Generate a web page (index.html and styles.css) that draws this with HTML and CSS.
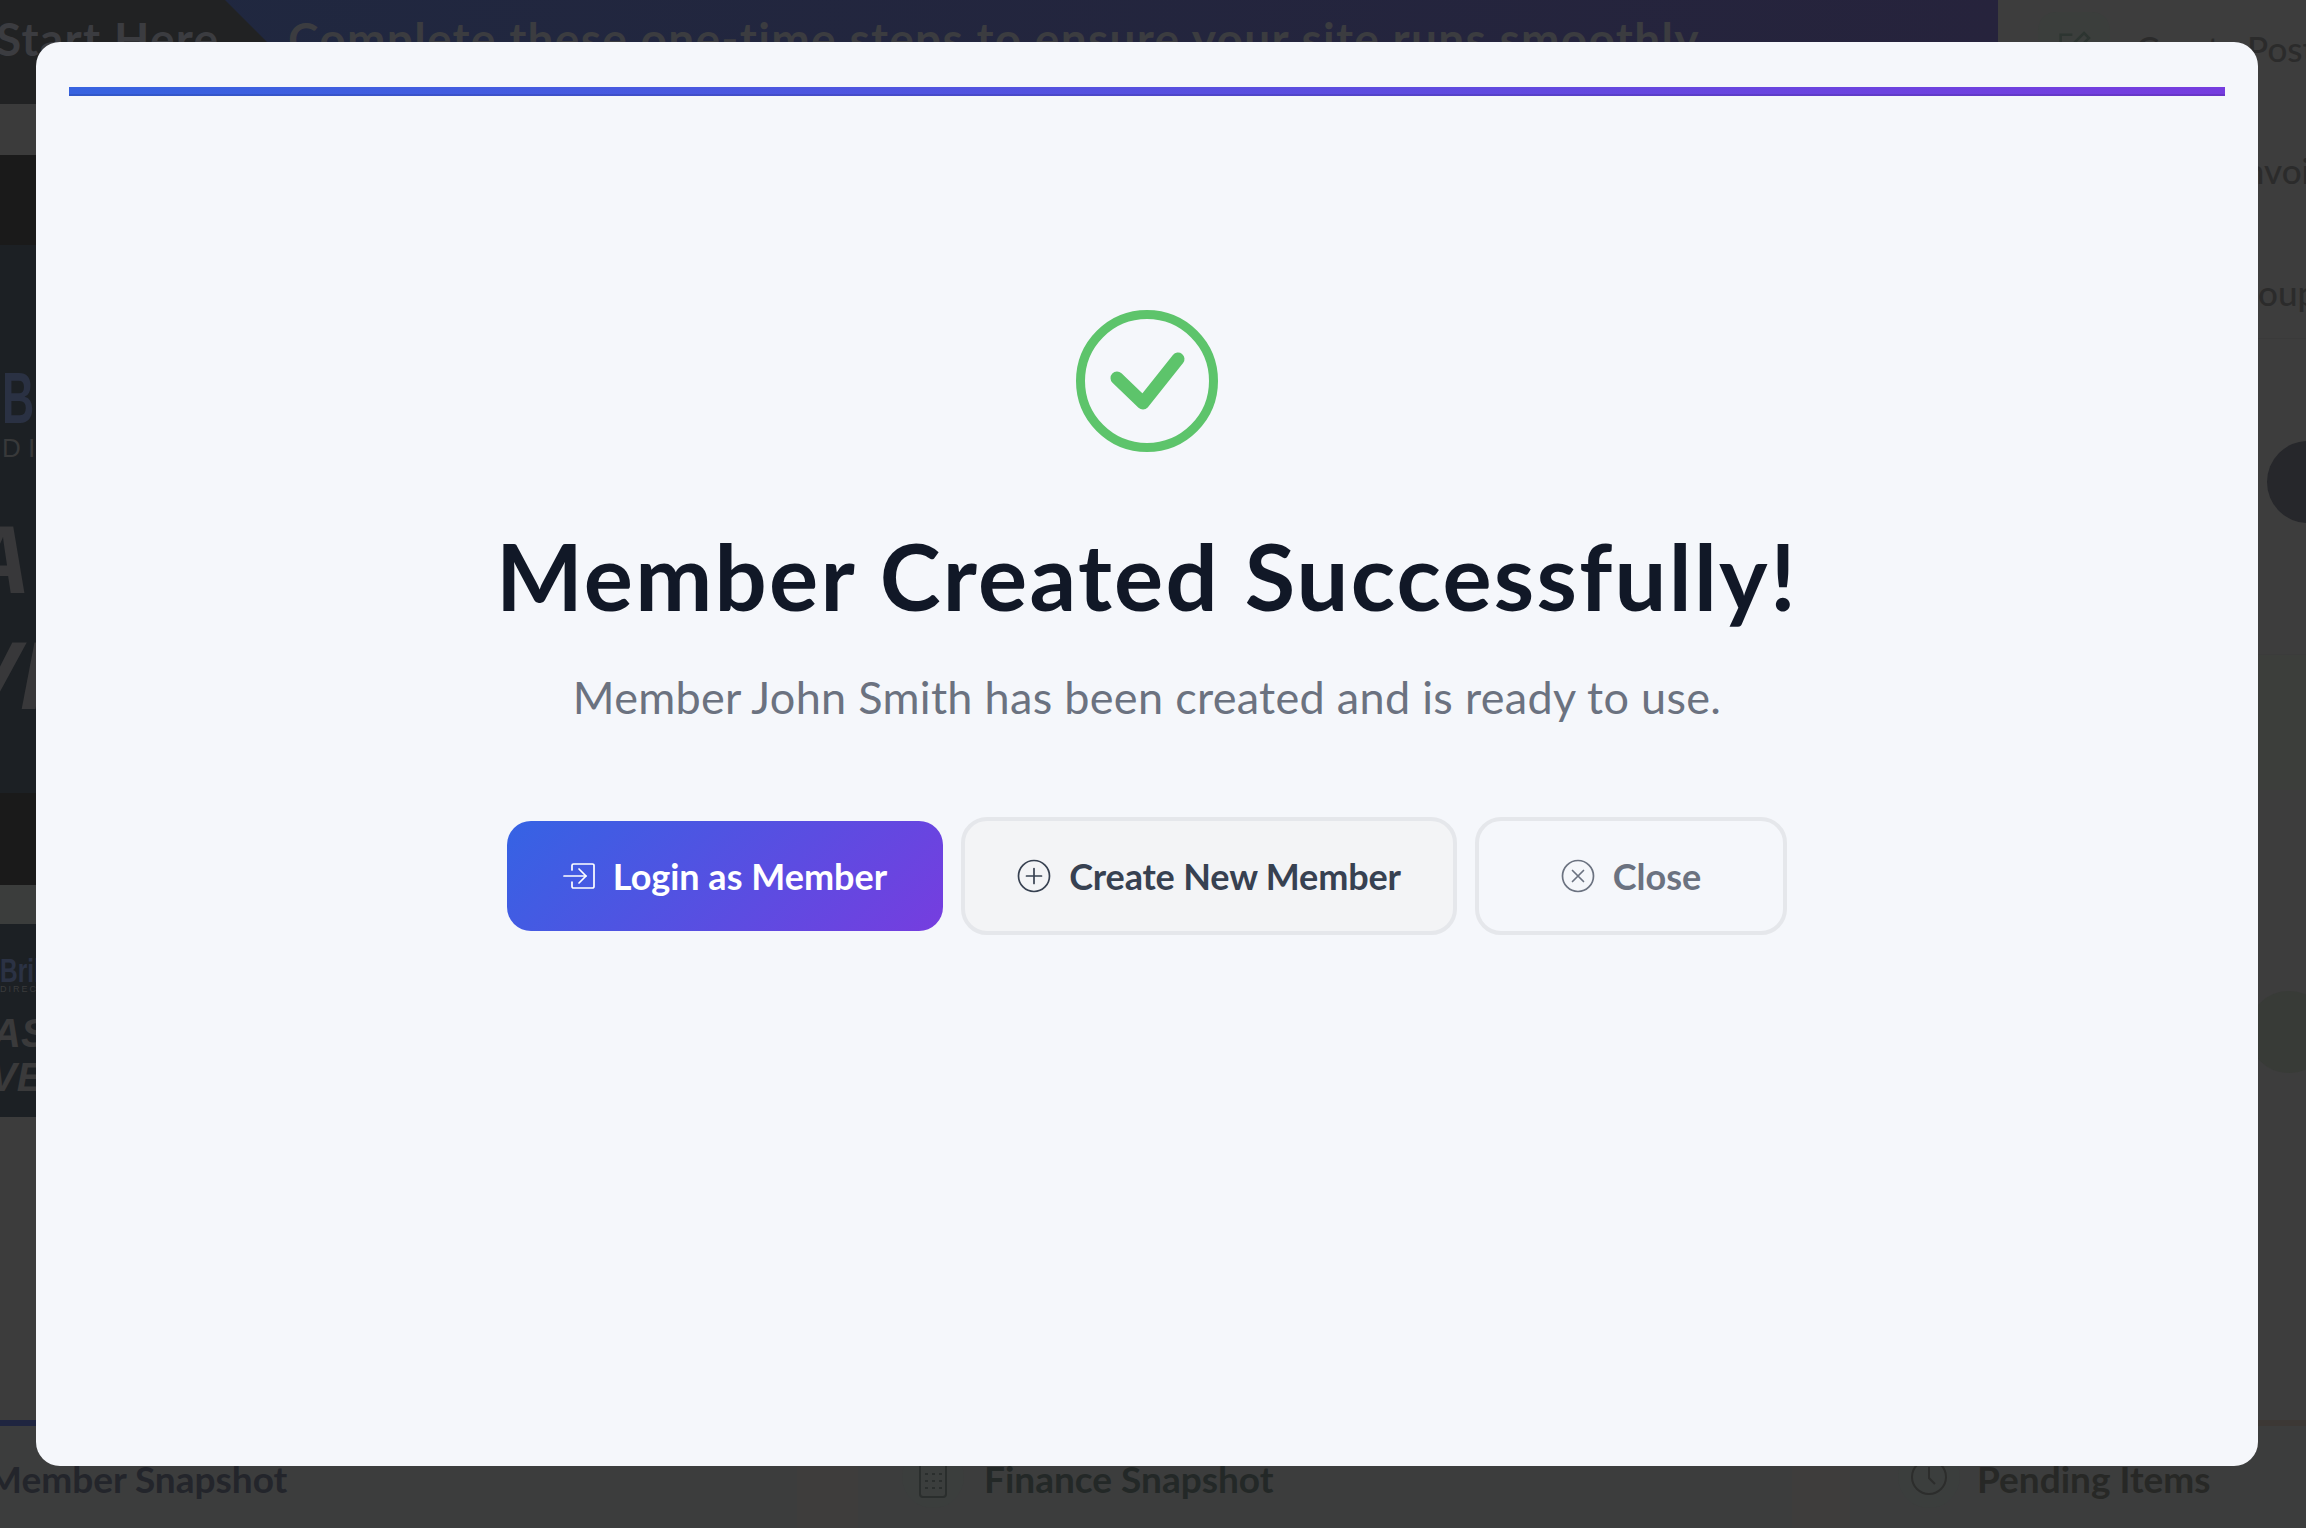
FILE: index.html
```html
<!DOCTYPE html>
<html lang="en">
<head>
    <meta charset="UTF-8">
    <meta name="viewport" content="width=device-width, initial-scale=1.0">
    <title>Member Created</title>
    <link rel="stylesheet" href="styles.css">
</head>
<body>

<div class="page">
    <div class="main">
        <div class="banner">
            <div class="banner-start"><span>Start Here</span></div>
            <div class="banner-text">Complete these one-time steps to ensure your site runs smoothly</div>
        </div>
        <div class="side-tiles">
            <div class="tile-bar"></div>
            <div class="tile-dark"></div>
            <div class="tile-photo tile-large">
                <div class="logo-b">B</div>
                <div class="logo-sub">D I</div>
                <div class="promo promo-a">A</div>
                <div class="promo promo-v">VI</div>
            </div>
            <div class="tile-dark tile-short"></div>
            <div class="tile-bar tile-bar-thin"></div>
            <div class="tile-photo tile-small">
                <div class="logo-small">Bril</div>
                <div class="logo-small-sub">DIREC</div>
                <div class="promo-small">AS</div>
                <div class="promo-small promo-small-b">VEE</div>
            </div>
        </div>
    </div>

    <div class="quick-panel">
        <div class="quick-list">
            <div class="quick-item">
                <div class="quick-icon">
                    <svg width="40" height="40" viewBox="0 0 24 24" fill="none" stroke="#2d3531" stroke-width="1.5"><path d="M11 4H4v16h16v-7"/><path d="M18 3l3 3-9 9H9v-3z"/></svg>
                </div>
                <span>Create Post</span>
            </div>
            <div class="quick-item quick-plain"><span>Create Invoice</span></div>
            <div class="quick-item quick-plain"><span>Create Coupon</span></div>
        </div>
        <div class="panel-row">
            <div class="panel-dot"></div>
        </div>
        <div class="panel-row panel-tint"></div>
        <div class="panel-row panel-lower">
            <div class="panel-dot panel-dot-green"></div>
        </div>
    </div>

    <div class="snapshots">
        <div class="snapshot snapshot-member"><h3>Member Snapshot</h3></div>
        <div class="snapshot-gap"></div>
        <div class="snapshot snapshot-finance">
            <div class="snap-icon">
                <svg width="30" height="44" viewBox="0 0 30 44" fill="none" stroke="#2a2e2d" stroke-width="2"><rect x="2" y="2" width="26" height="40" rx="3"/><path d="M7 19h3M14 19h3M21 19h3M7 26h3M14 26h3M21 26h3M7 33h3M14 33h3M21 33h3"/></svg>
            </div>
            <h3>Finance Snapshot</h3>
        </div>
        <div class="snapshot-gap"></div>
        <div class="snapshot snapshot-pending">
            <div class="snap-icon">
                <svg width="38" height="38" viewBox="0 0 38 38" fill="none" stroke="#2c2d2c" stroke-width="2"><circle cx="19" cy="19" r="17"/><path d="M19 9v11l6 6"/></svg>
            </div>
            <h3>Pending Items</h3>
        </div>
    </div>
</div>

<div class="modal">
    <div class="modal-bar"></div>
    <div class="modal-body">
        <svg class="success-icon" width="142" height="142" viewBox="0 0 142 142" fill="none" stroke="#5dc46b" stroke-linecap="round" stroke-linejoin="round">
            <circle cx="71" cy="71" r="66.5" stroke-width="9"/>
            <path d="M41 68l26 25 35-44" stroke-width="13"/>
        </svg>
        <h1 class="modal-title">Member Created Successfully!</h1>
        <p class="modal-text">Member John Smith has been created and is ready to use.</p>
        <div class="modal-actions">
            <button class="btn btn-primary">
                <svg width="32" height="26" viewBox="0 0 32 26" fill="none" stroke="#fff" stroke-width="1.7" stroke-linecap="round" stroke-linejoin="round"><path d="M9 7V2.5A1.5 1.5 0 0 1 10.500 1h19A1.500 1.500 0 0 1 31 2.500v21a1.500 1.500 0 0 1-1.500 1.500h-19A1.500 1.500 0 0 1 9 23.500V19"/><path d="M1 13h22"/><path d="M16 6l7 7-7 7"/></svg>
                Login as Member
            </button>
            <button class="btn btn-light">
                <svg width="34" height="34" viewBox="0 0 34 34" fill="none" stroke="#374151" stroke-width="1.700" stroke-linecap="round"><circle cx="17" cy="17" r="15.500"/><path d="M17 9.500v15M9.500 17h15"/></svg>
                Create New Member
            </button>
            <button class="btn btn-ghost">
                <svg width="34" height="34" viewBox="0 0 34 34" fill="none" stroke="#6b7280" stroke-width="1.700" stroke-linecap="round"><circle cx="17" cy="17" r="15.500"/><path d="M11.500 11.500l11 11M22.500 11.500l-11 11"/></svg>
                Close
            </button>
        </div>
    </div>
</div>

</body>
</html>
```

FILE: styles.css
```css
* {
    box-sizing: border-box;
}
body {
    margin: 0;
    width: 2306px;
    height: 1528px;
    overflow: hidden;
    font-family: Lato, "Noto Sans", sans-serif;
    background-color: #3c3c3c;
}

/* dimmed page behind the modal */
.page {
    display: grid;
    grid-template-columns: 1998px 308px;
    grid-template-rows: 1420px 108px;
    width: 2306px;
    height: 1528px;
    overflow: hidden;
}
.main {
    overflow: hidden;
}
.banner {
    display: flex;
    height: 104px;
    background: linear-gradient(90deg, #1f2840, #26233c);
    font-size: 46px;
    letter-spacing: 1.3px;
    font-weight: 700;
    color: #3b3c40;
    line-height: 78px;
    white-space: nowrap;
}
.banner-start {
    width: 290px;
    flex-shrink: 0;
    margin-right: -2px;
    background-color: #212223;
    clip-path: polygon(0 0, 225px 0, 290px 65px, 290px 104px, 0 104px);
    overflow: hidden;
}
.banner-start span {
    display: block;
    margin-left: -4px;
}
.banner-text {
    overflow: hidden;
}
.side-tiles {
    width: 400px;
}
.tile-bar {
    height: 51px;
    background-color: #3b3b3b;
}
.tile-bar-thin {
    height: 39px;
    background-color: #3b3d3c;
}
.tile-dark {
    height: 90px;
    background-color: #1a1a1a;
}
.tile-short {
    height: 92px;
}
.tile-photo {
    background-color: #1c2024;
    overflow: hidden;
    font-family: "Liberation Sans", sans-serif;
    font-weight: 700;
    white-space: nowrap;
}
.tile-large {
    height: 548px;
    padding-top: 118px;
}
.tile-small {
    height: 193px;
    padding-top: 32px;
}
.logo-b {
    font-size: 72px;
    line-height: 70px;
    color: #2a3143;
    margin-left: 2px;
    transform: scaleX(0.62);
    transform-origin: left;
}
.logo-sub {
    font-size: 26px;
    line-height: 30px;
    color: #38393a;
    margin-left: 2px;
    font-weight: 400;
}
.promo {
    font-size: 96px;
    line-height: 70px;
    color: #38383a;
    font-style: italic;
}
.promo-a {
    margin: 62px 0 0 -38px;
}
.promo-v {
    margin: 46px 0 0 -44px;
}
.logo-small {
    font-size: 34px;
    line-height: 28px;
    color: #2b3244;
    transform: scaleX(0.72);
    transform-origin: left;
}
.logo-small-sub {
    font-size: 9px;
    line-height: 10px;
    letter-spacing: 2px;
    color: #3a3b3c;
    font-weight: 400;
}
.promo-small {
    font-size: 40px;
    line-height: 34px;
    color: #3a3a3b;
    font-style: italic;
    margin: 22px 0 0 -8px;
}
.promo-small-b {
    margin: 10px 0 0 -10px;
}

.quick-panel {
    background-color: #3d3d3d;
    overflow: hidden;
}
.quick-list {
    height: 339px;
    padding: 12px 0 0 40px;
    border-bottom: 1px solid #3a3a3a;
    margin-bottom: 46px;
}
.quick-item {
    display: flex;
    align-items: center;
    gap: 26px;
    height: 72px;
    font-size: 35px;
    font-weight: 500;
    color: #2b2b2b;
    white-space: nowrap;
}
.quick-plain {
    margin: 50px 0 0 86px;
}
.quick-icon {
    display: flex;
    align-items: center;
    justify-content: center;
    flex-shrink: 0;
    width: 72px;
    height: 72px;
    border-radius: 18px;
    background-color: #3b3e3c;
}
.panel-row {
    height: 270px;
    padding: 56px 0 0 269px;
    border-bottom: 1px solid #3b3b3b;
}
.panel-tint {
    height: 135px;
    padding: 0;
    border: none;
    background-color: #3c3e3b;
}
.panel-lower {
    height: 500px;
    padding: 201px 0 0 250px;
    border-bottom: none;
}
.panel-dot {
    width: 82px;
    height: 82px;
    border-radius: 50%;
    background-color: #26272b;
}
.panel-dot-green {
    background-color: #383b37;
}

.snapshots {
    grid-column: 1 / 3;
    display: grid;
    grid-template-columns: 797px 61px 934px 58px 1fr;
    border-top: 6px solid #3c3835;
    background-color: #3c3d3d;
}
.snapshot {
    display: flex;
    align-items: flex-start;
    height: 102px;
    white-space: nowrap;
}
.snapshot h3 {
    margin: 31px 0 0;
    font-size: 37px;
    line-height: 44px;
    font-weight: 700;
    color: #23252b;
}
.snapshot-gap {
    background-color: #3e3d3c;
}
.snapshot-member {
    border-top: 6px solid #1f2540;
    margin-top: -6px;
}
.snapshot-member h3 {
    margin: 31px 0 0 -13px;
}
.snapshot-finance {
    padding-left: 44px;
    gap: 20px;
}
.snapshot-pending {
    padding-left: 48px;
    gap: 17px;
}
.snapshot-finance h3 {
    color: #232827;
}
.snapshot-pending h3 {
    color: #272826;
}
.snap-icon {
    display: flex;
    align-items: center;
    justify-content: center;
    flex-shrink: 0;
    width: 62px;
    height: 62px;
    margin-top: 20px;
    border-radius: 50%;
    background-color: #3b3e3d;
}

/* modal */
.modal {
    position: fixed;
    top: 42px;
    left: 36px;
    width: 2222px;
    height: 1424px;
    padding: 45px 33px;
    border-radius: 24px;
    background-color: #f5f7fb;
}
.modal-bar {
    height: 9px;
    background: linear-gradient(90deg, #3763e0, #763ddf);
    box-shadow: inset 0 -2px 0 rgba(0, 0, 0, 0.1);
}
.modal-body {
    display: flex;
    flex-direction: column;
    align-items: center;
    padding-top: 214px;
}
.success-icon {
    display: block;
}
.modal-title {
    margin: 74px 0 0;
    font-size: 92px;
    letter-spacing: 2.3px;
    line-height: 100px;
    font-weight: 700;
    color: #111827;
    white-space: nowrap;
}
.modal-text {
    margin: 41px 0 0;
    font-size: 45px;
    letter-spacing: 0.3px;
    line-height: 60px;
    font-weight: 400;
    color: #6b7280;
    white-space: nowrap;
}
.modal-actions {
    display: flex;
    align-items: center;
    gap: 18px;
    margin-top: 90px;
}
.btn {
    display: flex;
    align-items: center;
    justify-content: center;
    gap: 18px;
    height: 118px;
    padding: 0;
    border: 4px solid #e5e7eb;
    border-radius: 26px;
    font-family: inherit;
    font-size: 36px;
    font-weight: 700;
    white-space: nowrap;
}
.btn-primary {
    width: 436px;
    height: 110px;
    border: none;
    border-radius: 24px;
    background: linear-gradient(135deg, #3563e4, #763ddf);
    color: #fff;
}
.btn-light {
    width: 496px;
    letter-spacing: -0.15px;
    background-color: #f3f4f6;
    color: #374151;
}
.btn-ghost {
    width: 312px;
    background-color: transparent;
    color: #6b7280;
}
```
